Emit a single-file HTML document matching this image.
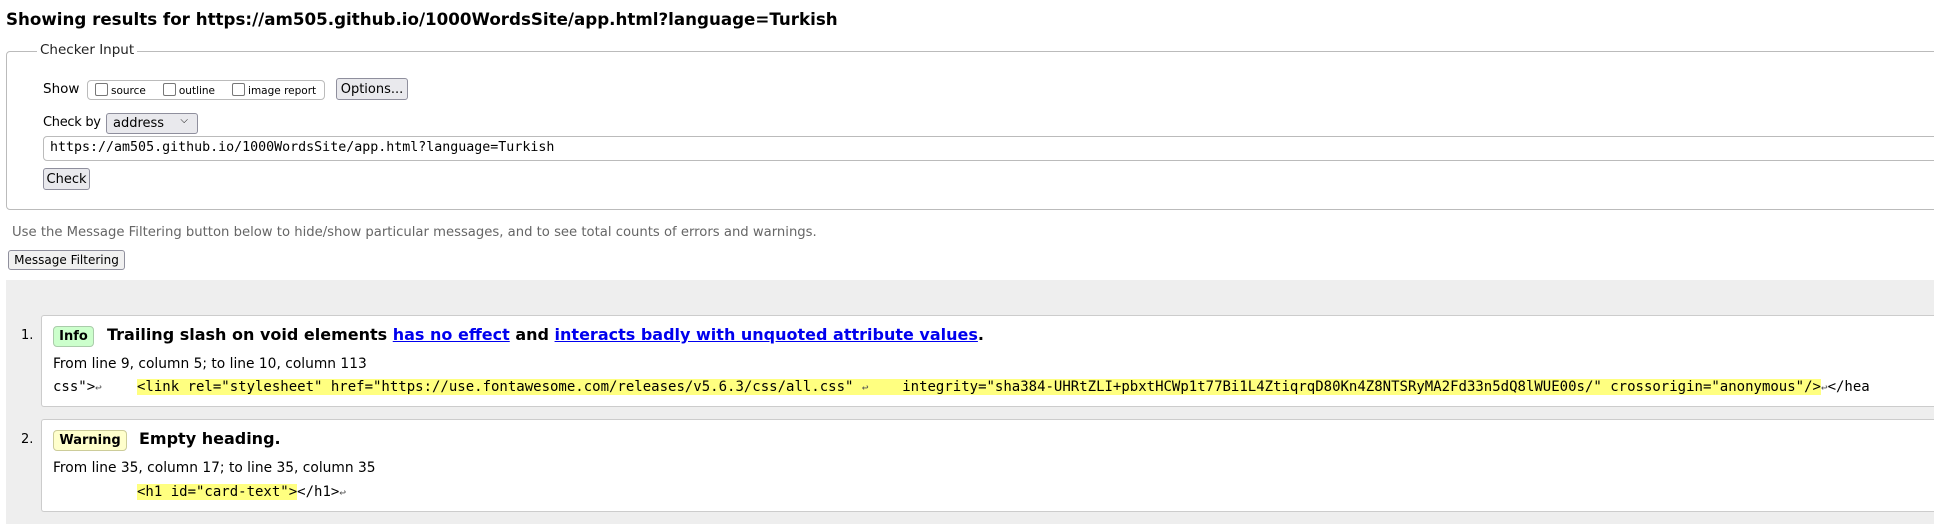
<!DOCTYPE html>
<html><head><meta charset="utf-8"><style>
*{box-sizing:border-box;margin:0;padding:0}
body{width:1934px;height:524px;background:#fff;font-family:"DejaVu Sans","Liberation Sans",sans-serif;color:#000;position:relative;overflow:hidden}
.a{position:absolute;white-space:nowrap}
.btn{position:absolute;background:#e9e9ed;border:1px solid #8f8f9d;border-radius:3px;font-size:13px;display:flex;align-items:center;justify-content:center}
.cb{display:inline-block;width:13px;height:13px;border:1px solid #777;border-radius:2px;vertical-align:-2px;margin-right:3px;background:#fff}
.mono{font-family:"DejaVu Sans Mono","Liberation Mono",monospace;white-space:pre}
.hl{background:#ffff80}
.box{position:absolute;left:41px;right:0;background:#fff;border:1px solid #ccc;border-right:none;border-radius:3px 0 0 3px}
a{color:#00e;text-decoration:underline}
.ret{color:#555;font-size:11px}
</style></head><body>
<div class="a" style="left:6px;top:9px;font-size:16.7px;font-weight:bold">Showing results for https://am505.github.io/1000WordsSite/app.html?language=Turkish</div>

<div class="a" style="left:6px;top:51px;right:-6px;height:159px;border:1px solid #bbb;border-radius:4px"></div>
<div class="a" style="left:37px;top:42px;background:#fff;padding:0 3px;font-size:13.5px;color:#222">Checker Input</div>

<div class="a" style="left:43px;top:81px;font-size:13.5px">Show</div>
<div class="a" style="left:87px;top:80px;width:238px;height:20px;border:1px solid #bbb;border-radius:4px;font-size:10.5px;padding-top:2px;padding-left:7px"><span class="cb"></span>source<span style="display:inline-block;width:17px"></span><span class="cb"></span>outline<span style="display:inline-block;width:17px"></span><span class="cb"></span>image report</div>
<div class="btn" style="left:336px;top:78px;width:72px;height:22px">Options...</div>

<div class="a" style="left:43px;top:115px;font-size:13px;letter-spacing:-0.3px">Check by</div>
<div class="btn" style="left:106px;top:113px;width:92px;height:21px;justify-content:flex-start;padding-left:6px">address<span style="position:absolute;right:9px;top:1px;font-size:10px">&#x2335;</span></div>
<div class="a mono" style="left:43px;top:136px;right:-10px;height:25px;border:1px solid #bbb;border-radius:4px;font-size:13.3px;padding:3px 0 0 6px">https://am505.github.io/1000WordsSite/app.html?language=Turkish</div>
<div class="btn" style="left:43px;top:168px;width:47px;height:22px">Check</div>

<div class="a" style="left:12px;top:225px;font-size:13.2px;color:#666">Use the Message Filtering button below to hide/show particular messages, and to see total counts of errors and warnings.</div>
<div class="btn" style="left:8px;top:250px;width:117px;height:20px;font-size:12px;background:#f0f0f0">Message Filtering</div>

<div class="a" style="left:6px;top:280px;right:0;bottom:0;background:#eee"></div>

<div class="box" style="top:315px;height:92px"></div>
<div class="a" style="left:21px;top:328px;font-size:13px">1.</div>
<div class="a" style="left:53px;top:326px;width:41px;height:21px;background:#cfc;border:1px solid #aca;border-radius:4px;font-size:13px;font-weight:bold;text-align:center;line-height:19px">Info</div>
<div class="a" style="left:107px;top:325px;font-size:16px;font-weight:bold">Trailing slash on void elements <a>has no effect</a> and <a>interacts badly with unquoted attribute values</a>.</div>
<div class="a" style="left:53px;top:356px;font-size:13.8px">From line 9, column 5; to line 10, column 113</div>
<div class="a mono" style="left:53px;top:378px;font-size:14px;line-height:19px">css"&gt;<span class="ret">↩</span></div>
<div class="a mono" style="left:137px;top:378px;font-size:14px;line-height:19px"><span class="hl">&lt;link rel="stylesheet" href="https://use.fontawesome.com/releases/v5.6.3/css/all.css" <span class="ret">↩</span>    integrity="sha384-UHRtZLI+pbxtHCWp1t77Bi1L4ZtiqrqD80Kn4Z8NTSRyMA2Fd33n5dQ8lWUE00s/" crossorigin="anonymous"/&gt;</span><span class="ret">↩</span>&lt;/hea</div>

<div class="box" style="top:419px;height:93px"></div>
<div class="a" style="left:21px;top:432px;font-size:13px">2.</div>
<div class="a" style="left:53px;top:430px;width:74px;height:21px;background:#ffc;border:1px solid #cc9;border-radius:4px;font-size:13px;font-weight:bold;text-align:center;line-height:19px">Warning</div>
<div class="a" style="left:139px;top:429px;font-size:16px;font-weight:bold">Empty heading.</div>
<div class="a" style="left:53px;top:460px;font-size:13.8px">From line 35, column 17; to line 35, column 35</div>
<div class="a mono" style="left:137px;top:483px;font-size:14px;line-height:19px"><span class="hl">&lt;h1 id="card-text"&gt;</span>&lt;/h1&gt;<span class="ret">↩</span></div>
</body></html>
